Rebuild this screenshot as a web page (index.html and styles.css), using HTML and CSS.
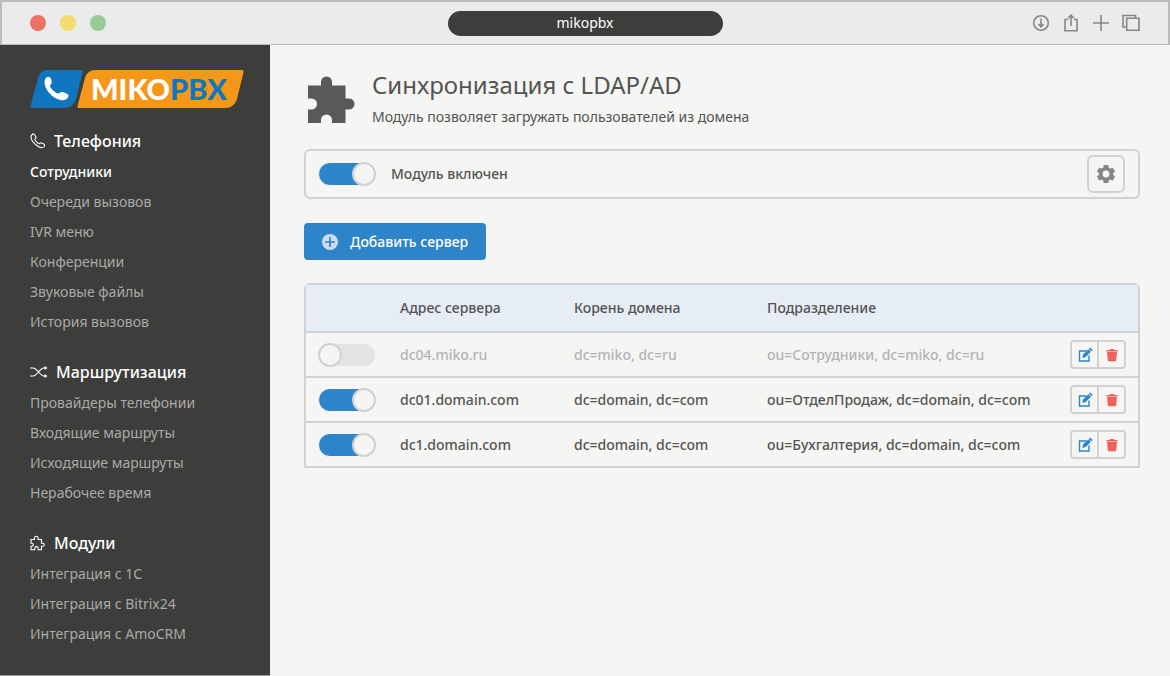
FILE: index.html
```html
<!DOCTYPE html>
<html lang="ru">
<head>
<meta charset="utf-8">
<meta name="viewport" content="width=device-width, initial-scale=1">
<title>mikopbx</title>
<link rel="stylesheet" href="styles.css">
</head>
<body>
<svg class="sprite" aria-hidden="true">
  <symbol id="edit" viewBox="0 0 16 16">
    <path d="M9.500 4H2.500v10h9.500V8.500" fill="none" stroke="currentColor" stroke-width="1.400"/>
    <path d="M5.300 11l.8-3.500L11.300 2.200l2.600 2.600L8.700 10.100z" fill="currentColor"/>
    <path d="M12 1.700l1.200-1.200 2.500 2.500-1.200 1.200z" fill="currentColor"/>
  </symbol>
  <symbol id="trash" viewBox="0 0 12 14">
    <path d="M.5 2h3l.6-.9h3.800l.6.900h3v1.600H.5z" fill="currentColor"/>
    <path d="M1 4h10L10.200 12.300q-.1 1-1 1H2.800q-.9 0-1-1z" fill="currentColor"/>
  </symbol>
</svg>
<div class="window">
  <header class="titlebar">
    <div class="lights"><span class="light light-red"></span><span class="light light-yellow"></span><span class="light light-green"></span></div>
    <div class="address">mikopbx</div>
    <div class="tools">
      <button class="tool" aria-label="Загрузки"><svg width="18" height="18" viewBox="0 0 18 18"><circle cx="9" cy="9" r="7.300"/><path d="M9 4.500v8M6.400 10L9 12.800l2.600-2.800"/></svg></button>
      <button class="tool" aria-label="Поделиться"><svg width="18" height="18" viewBox="0 0 18 18"><path d="M6 5.500H3v11.300h12V5.500h-3M9 12V1.500M6 4.300L9 1.200l3 3.100"/></svg></button>
      <button class="tool" aria-label="Новая вкладка"><svg width="18" height="18" viewBox="0 0 18 18"><path d="M9 1v16M1 9h16"/></svg></button>
      <button class="tool" aria-label="Все вкладки"><svg width="18" height="18" viewBox="0 0 18 18"><path d="M4.700 4.200h12.300v12H4.700zM4 13H1V1.500h12.500V4"/></svg></button>
    </div>
  </header>
  <div class="layout">
    <aside class="sidebar">
      <a class="logo" href="#" aria-label="MIKOPBX">
        <svg width="214" height="40" viewBox="0 0 214 40">
          <path d="M17 1h34q2 0 1.600 2L46 30q-3 9-12 9H1.500Q0 39 .4 37.500L8 9Q10.500 1 17 1z" fill="#1076bf"/>
          <path d="M65 1h147q2 0 1.600 2L207 30q-3 9-12 9H49q-2 0-1.600-1.500L55 9Q57.500 1 65 1z" fill="#f59819"/>
          <path d="M16.500 8.500c1.500-1.500 3.500-.5 4.500 1.500 1.500 3.500.5 4.500-1 6.500-.5 2 6 8.500 8.500 8 1.500-1 3-2 5-1.200 2.500 1 5.500 2 5 4-1 3.200-4.500 4.500-8 3.700C22 29 14.500 20.500 14.500 13c0-2 .8-3.500 2-4.500z" fill="#fff"/>
          <text class="logo-text" x="61" y="31" fill="#fff">MIKO<tspan fill="#1076bf">PBX</tspan></text>
        </svg>
      </a>
      <nav class="nav">
        <section class="group">
          <h2 class="group-title"><svg width="16" height="16" viewBox="0 0 16 16"><path d="M2.200 1.500c1-1 2-.7 2.800.7l.9 1.800c.3.900-.1 1.400-.9 2-.8.800 3.400 5.200 4.500 4.700.7-.7 1.200-1.200 2.100-.8l2 1c1.300.8 1.400 1.600.6 2.600-1.600 1.900-4.600 1.200-7.700-1.200C3.600 10 1.500 7.500 1.100 5c-.2-1.500.3-2.800 1.100-3.500z"/></svg>Телефония</h2>
          <ul>
            <li><a class="active" href="#">Сотрудники</a></li>
            <li><a href="#">Очереди вызовов</a></li>
            <li><a href="#">IVR меню</a></li>
            <li><a href="#">Конференции</a></li>
            <li><a href="#">Звуковые файлы</a></li>
            <li><a href="#">История вызовов</a></li>
          </ul>
        </section>
        <section class="group">
          <h2 class="group-title"><svg width="18" height="16" viewBox="0 0 18 16"><path d="M0 4h3c4.500 0 6.500 8 11 8h1.500M0 12h3C7.500 12 9.500 4 14 4h1.500"/><path d="M14.500 2l3 2-3 2zM14.500 10l3 2-3 2z" fill="#fff" stroke="none"/></svg>Маршрутизация</h2>
          <ul>
            <li><a href="#">Провайдеры телефонии</a></li>
            <li><a href="#">Входящие маршруты</a></li>
            <li><a href="#">Исходящие маршруты</a></li>
            <li><a href="#">Нерабочее время</a></li>
          </ul>
        </section>
        <section class="group">
          <h2 class="group-title"><svg width="16" height="16" viewBox="0 0 16 16"><path d="M1 4.500h3.500V3a1.800 1.800 0 0 1 3.600 0v1.500h3.400v3.700h1.300a1.500 1.500 0 0 1 0 3h-1.300v3.600H8.200v-1.500a1.700 1.700 0 0 0-3.400 0v1.500H1v-3.600h.8a1.500 1.500 0 0 0 0-3H1z"/></svg>Модули</h2>
          <ul>
            <li><a href="#">Интеграция с 1С</a></li>
            <li><a href="#">Интеграция с Bitrix24</a></li>
            <li><a href="#">Интеграция с AmoCRM</a></li>
          </ul>
        </section>
      </nav>
    </aside>
    <main class="main">
      <div class="heading">
        <svg width="48" height="48" viewBox="0 0 48 48"><path d="M1 9.500h13V6a5.500 5.500 0 0 1 11 0v3.500h13.500V22.500h3.500a5.500 5.500 0 0 1 0 11h-3.500V47H25v-3a5.500 5.500 0 0 0-11 0v3H1V33.500h3.500a5.500 5.500 0 0 0 0-11H1z" fill="#595957"/></svg>
        <div>
          <h1>Синхронизация с LDAP/AD</h1>
          <p>Модуль позволяет загружать пользователей из домена</p>
        </div>
      </div>
      <div class="panel">
        <label class="module"><input class="switch" type="checkbox" checked>Модуль включен</label>
        <button class="gear" aria-label="Настройки"><svg width="20" height="20" viewBox="0 0 20 20"><path fill-rule="evenodd" d="M7.800 1h4.400l.6 2.700 1.500.9 2.600-.9 2.200 3.800-2 1.800v1.500l2 1.800-2.200 3.800-2.600-.9-1.500.9-.6 2.600H7.800l-.6-2.600-1.500-.9-2.600.9-2.200-3.800 2-1.800V9.200l-2-1.700 2.200-3.800 2.600.9 1.500-.9zM10 6.600a3.400 3.400 0 1 0 0 6.800 3.400 3.400 0 0 0 0-6.800z"/></svg></button>
      </div>
      <button class="add"><svg width="16" height="16" viewBox="0 0 16 16"><circle cx="8" cy="8" r="8" fill="#cfdbf4"/><path d="M8 3v10M3 8h10" stroke="#2d84c8" stroke-width="1.600"/></svg>Добавить сервер</button>
      <table class="servers">
        <colgroup><col class="col-toggle"><col class="col-address"><col class="col-root"><col><col class="col-actions"></colgroup>
        <thead>
          <tr><th></th><th>Адрес сервера</th><th>Корень домена</th><th>Подразделение</th><th></th></tr>
        </thead>
        <tbody>
          <tr class="off">
            <td><input class="switch" type="checkbox" aria-label="dc04.miko.ru"></td>
            <td>dc04.miko.ru</td><td>dc=miko, dc=ru</td><td>ou=Сотрудники, dc=miko, dc=ru</td>
            <td><div class="actions"><button class="edit" aria-label="Изменить"><svg width="16" height="16"><use href="#edit"/></svg></button><button class="delete" aria-label="Удалить"><svg width="12" height="14"><use href="#trash"/></svg></button></div></td>
          </tr>
          <tr>
            <td><input class="switch" type="checkbox" checked aria-label="dc01.domain.com"></td>
            <td>dc01.domain.com</td><td>dc=domain, dc=com</td><td>ou=ОтделПродаж, dc=domain, dc=com</td>
            <td><div class="actions"><button class="edit" aria-label="Изменить"><svg width="16" height="16"><use href="#edit"/></svg></button><button class="delete" aria-label="Удалить"><svg width="12" height="14"><use href="#trash"/></svg></button></div></td>
          </tr>
          <tr>
            <td><input class="switch" type="checkbox" checked aria-label="dc1.domain.com"></td>
            <td>dc1.domain.com</td><td>dc=domain, dc=com</td><td>ou=Бухгалтерия, dc=domain, dc=com</td>
            <td><div class="actions"><button class="edit" aria-label="Изменить"><svg width="16" height="16"><use href="#edit"/></svg></button><button class="delete" aria-label="Удалить"><svg width="12" height="14"><use href="#trash"/></svg></button></div></td>
          </tr>
        </tbody>
      </table>
    </main>
  </div>
</div>
</body>
</html>
```
FILE: styles.css
```css
* { box-sizing: border-box; }
body {
  margin: 0;
  background: #f5f5f3;
  color: #545452;
  font: 500 14px/20px "Noto Sans", "Open Sans", sans-serif;
}
button { font: inherit; color: inherit; margin: 0; padding: 0; background: none; border: 0; }
h1, h2, p, ul { margin: 0; padding: 0; }
ul { list-style: none; }
a { text-decoration: none; }
svg { display: block; flex: none; }
.sprite { position: absolute; width: 0; height: 0; }

.window {
  display: flex;
  flex-direction: column;
  min-height: 100vh;
}
.titlebar {
  display: grid;
  grid-template-columns: 1fr 275px 1fr;
  align-items: center;
  height: 45px;
  padding: 0 28px;
  background: #ebebeb;
  border: 2px solid #bcbcbc;
  border-bottom-width: 1px;
}
.lights { display: flex; gap: 14px; }
.light { width: 16px; height: 16px; border-radius: 50%; }
.light-red { background: #ee7264; }
.light-yellow { background: #f3dc6b; }
.light-green { background: #98cb95; }
.address {
  height: 25px;
  border-radius: 13px;
  background: #3d3d3b;
  color: #fff;
  font-weight: 400;
  line-height: 23px;
  text-align: center;
}
.tools { display: flex; justify-content: flex-end; gap: 12px; }
.tool svg { fill: none; stroke: #858785; stroke-width: 1.6; }

.layout { flex: 1; display: flex; }
.sidebar {
  flex: none;
  width: 270px;
  padding: 24px 26px 24px 30px;
  background: #3d3d3b;
  border-bottom: 1px solid #9a9a98;
}
.logo { display: block; }
.logo-text { font: 900 29px Lato, sans-serif; }
.nav { display: flex; flex-direction: column; gap: 19px; padding-top: 16px; }
.group-title {
  display: flex;
  align-items: center;
  gap: 8px;
  color: #fff;
  font-size: 16px;
  font-weight: 500;
  line-height: 32px;
}
.group-title svg { fill: none; stroke: #fff; stroke-width: 1.1; }
.nav a { display: block; color: #aaaaa8; font-weight: 400; line-height: 30px; }
.nav .active { color: #fff; font-weight: 500; }

.main { flex: 1; min-width: 0; padding: 23px 30px 24px 34px; }
.heading { display: flex; align-items: flex-start; gap: 17px; padding-left: 3px; }
.heading svg { margin-top: 8px; }
.heading h1 { font-size: 24px; font-weight: 400; line-height: 34px; }
.heading p { padding-top: 5px; line-height: 20px; font-weight: 400; }
.panel {
  display: flex;
  align-items: center;
  justify-content: space-between;
  margin-top: 22px;
  height: 50px;
  padding: 0 13px 0 12px;
  border: 2px solid #d1d1d1;
  border-radius: 6px;
}
.module { display: flex; align-items: center; gap: 15px; }
.switch {
  appearance: none;
  display: block;
  flex: none;
  width: 58px;
  height: 24px;
  margin: 0;
  border: 1px solid #f5f5f3;
  border-radius: 12px;
  background: #e3e3e3;
}
.switch::before {
  content: "";
  display: block;
  box-sizing: border-box;
  width: 24px;
  height: 24px;
  margin: -1px;
  border: 2px solid #d1d1d1;
  border-radius: 50%;
  background: #f5f5f3;
}
.switch:checked { background: #2d84c8; }
.switch:checked::before { margin-left: auto; }
.gear {
  display: grid;
  place-items: center;
  width: 38px;
  height: 38px;
  border: 2px solid #d1d1d1;
  border-radius: 6px;
}
.gear svg { fill: #858785; }
.add {
  display: flex;
  align-items: center;
  gap: 12px;
  height: 37px;
  margin: 24px 0 23px;
  padding: 0 18px;
  border-radius: 4px;
  background: #2d84c8;
  color: #fff;
}

.servers {
  width: 100%;
  table-layout: fixed;
  border: 2px solid #d1d1d1;
  border-radius: 6px 6px 0 0;
  border-spacing: 0;
}
.col-toggle { width: 94px; }
.col-address { width: 174px; }
.col-root { width: 193px; }
.col-actions { width: 68px; }
.servers th { height: 46px; padding: 0; background: #e7edf7; font-weight: 500; text-align: left; }
.servers td { height: 45px; padding: 0; border-top: 2px solid #d1d1d1; white-space: nowrap; }
.servers td:first-child { padding-left: 12px; }
.servers .off td { color: #b3b3b3; }
.actions {
  display: flex;
  width: 56px;
  height: 29px;
  border: 2px solid #d1d1d1;
  border-radius: 4px;
}
.actions button { flex: 1; display: grid; place-items: center; }
.actions .edit { border-right: 2px solid #d1d1d1; color: #2d84c8; }
.actions .delete { color: #ee625c; }
```
